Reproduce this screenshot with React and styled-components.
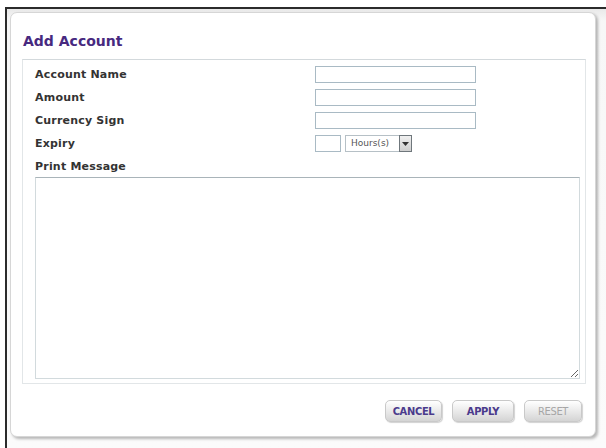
import styled, { createGlobalStyle } from 'styled-components'

const GlobalStyle = createGlobalStyle`
  html, body {
    margin: 0;
    padding: 0;
    background: #ffffff;
  }
`;

const Screen = styled.div`
  width: 606px;
  height: 448px;
  box-sizing: border-box;
  padding: 7px 0 0 5px;
  overflow: hidden;
  font-family: "DejaVu Sans", Verdana, sans-serif;
`;

const Frame = styled.div`
  height: 100%;
  box-sizing: border-box;
  border-left: 2px solid #2b2b2b;
  border-top: 2px solid #2b2b2b;
  background: linear-gradient(#e9e9e9, #f7f7f7 12px, #fbfbfb);
  padding: 3px 0 0 3px;
`;

const Panel = styled.section`
  width: 586px;
  height: 425px;
  box-sizing: border-box;
  background: #ffffff;
  border: 1px solid #d6d6d6;
  border-radius: 7px;
  box-shadow: 2px 2px 3px rgba(0, 0, 0, 0.28);
  padding: 19px 9px 0 11px;
  display: flex;
  flex-direction: column;
`;

const Title = styled.h1`
  margin: 0 0 9px 1px;
  font-size: 14px;
  line-height: 18px;
  font-weight: bold;
  color: #47297f;
`;

const FieldBox = styled.div`
  height: 325px;
  box-sizing: border-box;
  border: 1px solid #e2e6e8;
  border-top-color: #d3d9dc;
  padding: 3px 7px 4px 12px;
  display: flex;
  flex-direction: column;
`;

const Row = styled.div`
  display: grid;
  grid-template-columns: 280px 1fr;
  align-items: center;
  height: ${(p) => p.$h || 23}px;
`;

const Label = styled.label`
  font-size: 11px;
  font-weight: bold;
  letter-spacing: 0.2px;
  color: #333333;
`;

const TextInput = styled.input`
  width: ${(p) => p.$w || 161}px;
  height: 17px;
  box-sizing: border-box;
  border: 1px solid #a9bac4;
  background: #ffffff;
  padding: 0 3px;
  margin: 0;
  font-size: 10px;
  outline: none;
`;

const Controls = styled.div`
  display: flex;
  align-items: center;
  gap: 4px;
`;

const Select = styled.div`
  display: flex;
  align-items: stretch;
  height: 17px;
  box-sizing: border-box;
  border: 1px solid #b6c0c6;
`;

const SelectText = styled.span`
  width: 48px;
  padding-left: 5px;
  font-size: 9px;
  line-height: 15px;
  color: #555555;
`;

const SelectArrow = styled.span`
  width: 11px;
  border: 1px solid #6f777c;
  margin: -1px -1px -1px 0;
  background: linear-gradient(#f0f0f0, #cfcfcf);
  display: flex;
  align-items: center;
  justify-content: center;
`;

const Message = styled.textarea`
  width: 545px;
  height: 202px;
  box-sizing: border-box;
  margin: 0;
  border: 1px solid #d2dadd;
  border-top-color: #a9b4b9;
  background: #ffffff;
  font-family: inherit;
  font-size: 10px;
  outline: none;
`;

const Actions = styled.div`
  display: flex;
  justify-content: flex-end;
  gap: 10px;
  margin-top: 16px;
  padding-right: 4px;
`;

const Button = styled.button`
  width: ${(p) => p.$w}px;
  height: 22px;
  box-sizing: border-box;
  border: 1px solid #c9c9c9;
  border-radius: 5px;
  background: linear-gradient(#ffffff, #e6e6e6 60%, #d4d4d4);
  box-shadow: 1px 1px 1px rgba(0, 0, 0, 0.18);
  font-family: "DejaVu Sans Condensed", "DejaVu Sans", sans-serif;
  font-size: 11px;
  font-weight: ${(p) => (p.disabled ? 'normal' : 'bold')};
  letter-spacing: -0.3px;
  color: ${(p) => (p.disabled ? '#a6a6a6' : '#4a3a8c')};
  padding: 0;
  cursor: pointer;
`;

export default function App() {
  return (
    <>
      <GlobalStyle />
      <Screen>
        <Frame>
          <Panel>
            <Title>Add Account</Title>
            <FieldBox>
              <Row>
                <Label>Account Name</Label>
                <TextInput type="text" />
              </Row>
              <Row>
                <Label>Amount</Label>
                <TextInput type="text" />
              </Row>
              <Row>
                <Label>Currency Sign</Label>
                <TextInput type="text" />
              </Row>
              <Row>
                <Label>Expiry</Label>
                <Controls>
                  <TextInput type="text" $w={26} />
                  <Select>
                    <SelectText>Hours(s)</SelectText>
                    <SelectArrow>
                      <svg width="7" height="4" viewBox="0 0 7 4">
                        <path d="M0 0h7L3.5 4z" fill="#333" />
                      </svg>
                    </SelectArrow>
                  </Select>
                </Controls>
              </Row>
              <Row $h={22}>
                <Label>Print Message</Label>
              </Row>
              <Message />
            </FieldBox>
            <Actions>
              <Button $w={57}>CANCEL</Button>
              <Button $w={62}>APPLY</Button>
              <Button $w={58} disabled>RESET</Button>
            </Actions>
          </Panel>
        </Frame>
      </Screen>
    </>
  );
}
